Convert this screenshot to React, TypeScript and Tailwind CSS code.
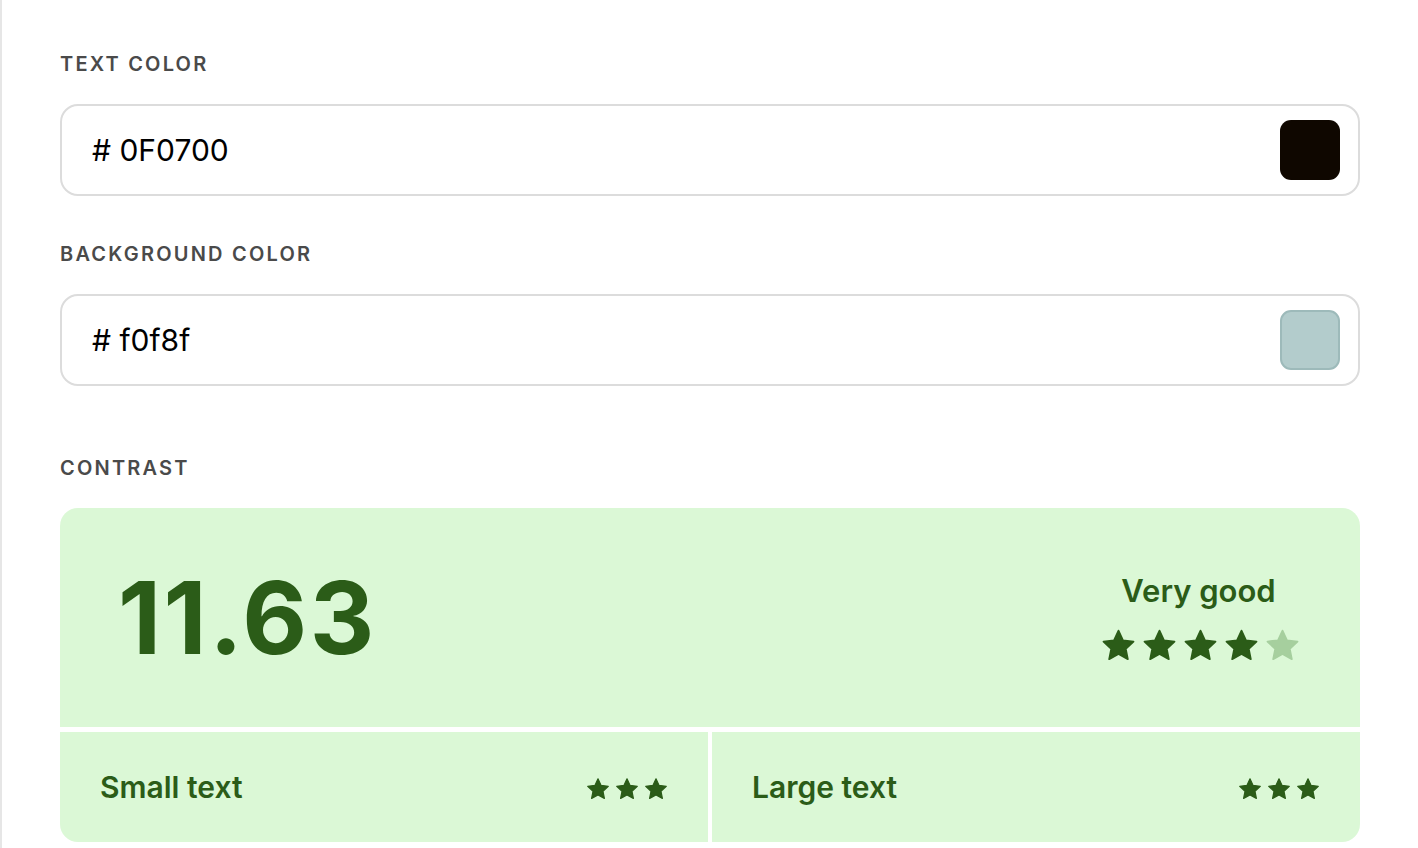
import React from "react";

const Star = ({ size, color }: { size: number; color: string }) => (
  <svg width={size} height={size} viewBox="0 0 24 24">
    <path
      d="M12 1.8l3.1 6.6 7.2.9-5.3 5 1.4 7.1L12 17.9l-6.4 3.5 1.4-7.1-5.3-5 7.2-.9z"
      fill={color}
      stroke={color}
      strokeWidth="1.2"
      strokeLinejoin="round"
    />
  </svg>
);

const Field = ({ label, value, swatch }: { label: string; value: string; swatch: React.ReactNode }) => (
  <div className="flex flex-col">
    <div className="text-[20px] leading-[24px] font-semibold tracking-[0.11em] text-[#4a4a4a] uppercase">{label}</div>
    <div className="mt-[28px] h-[92px] rounded-[18px] border-2 border-[#dcdcdc] flex items-center justify-between pl-[30px] pr-[18px]">
      <span className="text-[30px] text-black">{value}</span>
      {swatch}
    </div>
  </div>
);

export default function App() {
  const green = "#2b5c18";
  return (
    <div className="min-h-[848px] w-[1418px] bg-white flex" style={{ fontFamily: "Inter, 'Noto Sans', sans-serif" }}>
      <div className="w-[2px] bg-[#e6e6e6] shrink-0" />
      <div className="w-[1300px] ml-[58px] pt-[52px] flex flex-col">
        <Field label="Text color" value="# 0F0700" swatch={<div className="w-[60px] h-[60px] rounded-[11px] bg-[#0f0700]" />} />
        <div className="h-[46px]" />
        <Field
          label="Background color"
          value="# f0f8f"
          swatch={<div className="w-[60px] h-[60px] rounded-[11px] bg-[#b3cccc] border-2 border-[#9dbaba]" />}
        />
        <div className="mt-[70px] text-[20px] leading-[24px] font-semibold tracking-[0.11em] text-[#4a4a4a] uppercase">Contrast</div>
        <div className="mt-[28px] rounded-[18px] overflow-hidden flex flex-col gap-[5px]">
          <div className="h-[219px] bg-[#dbf8d6] flex items-center justify-between pl-[58px] pr-[60px]">
            <span className="text-[100px] font-bold tracking-[0.025em] leading-none" style={{ color: green }}>11.63</span>
            <div className="flex flex-col items-center gap-[22px] mt-[2px]">
              <span className="text-[31px] font-semibold leading-none" style={{ color: green }}>Very good</span>
              <div className="flex gap-[6px] pl-[4px]">
                <Star size={35} color={green} />
                <Star size={35} color={green} />
                <Star size={35} color={green} />
                <Star size={35} color={green} />
                <Star size={35} color="#a6cf9e" />
              </div>
            </div>
          </div>
          <div className="grid grid-cols-2 gap-[4px] h-[110px]">
            <div className="bg-[#dbf8d6] flex items-center justify-between pl-[40px] pr-[40px]">
              <span className="text-[30px] font-semibold" style={{ color: green }}>Small text</span>
              <div className="flex gap-[5px] mt-[4px]">
                <Star size={24} color={green} />
                <Star size={24} color={green} />
                <Star size={24} color={green} />
              </div>
            </div>
            <div className="bg-[#dbf8d6] flex items-center justify-between pl-[40px] pr-[40px]">
              <span className="text-[30px] font-semibold" style={{ color: green }}>Large text</span>
              <div className="flex gap-[5px] mt-[4px]">
                <Star size={24} color={green} />
                <Star size={24} color={green} />
                <Star size={24} color={green} />
              </div>
            </div>
          </div>
        </div>
      </div>
    </div>
  );
}
